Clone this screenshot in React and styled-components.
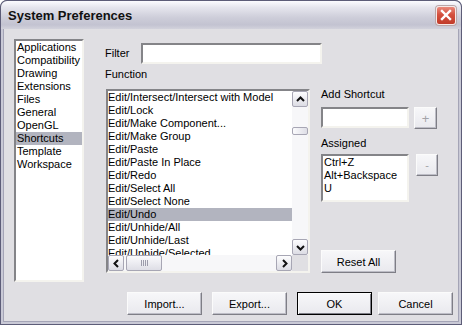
import styled, { createGlobalStyle } from "styled-components";

const GlobalStyle = createGlobalStyle`
  body {
    margin: 0;
    background: #ffffff;
    font-family: "Liberation Sans", Arial, sans-serif;
    font-size: 11px;
  }
`

const Window = styled.div`
  width: 462px;
  height: 325px;
  box-sizing: border-box;
  display: flex;
  flex-direction: column;
  background: #c9c9d6;
  border-radius: 7px 7px 0 0;
  box-shadow: inset 0 0 0 1px #5d5d78;
  padding: 0 3px 3px;
  overflow: hidden;
`

const TitleBar = styled.div`
  height: 28px;
  margin: 0 -3px;
  padding: 0 5px 0 7px;
  display: flex;
  align-items: center;
  justify-content: space-between;
  border-radius: 7px 7px 0 0;
  border: 1px solid #5d5d78;
  border-bottom: none;
  background: linear-gradient(#fcfcff 0%, #e6e6ee 22%, #cdcdd9 60%, #c3c3d1 85%, #d2d2dc 100%);
`

const Title = styled.span`
  font-family: "Liberation Sans", Arial, sans-serif;
  font-weight: bold;
  font-size: 13px;
  color: #111;
`

const CloseButton = styled.div`
  width: 20px;
  height: 19px;
  box-sizing: border-box;
  border: 1px solid #f6e8e6;
  border-radius: 3px;
  background: linear-gradient(#e98a7c, #d4503e 45%, #c13b2a);
  display: flex;
  align-items: center;
  justify-content: center;
  box-shadow: 0 0 0 1px #b9a6a8;
`

const Body = styled.div`
  flex: 1;
  display: flex;
  flex-direction: column;
  background: #e0dfe3;
  border: 1px solid #a4a4b6;
  border-top: none;
  padding: 10px 4px 6px 10px;
`

const Top = styled.div`
  display: flex;
  height: 243px;
`

const ListBox = styled.div`
  box-sizing: border-box;
  width: ${p => p.width}px;
  height: ${p => p.height}px;
  background: #ffffff;
  border: 2px solid;
  border-color: #848488 #f4f3ee #f4f3ee #848488;
  overflow: hidden;
`

const Item = styled.div`
  height: 13px;
  line-height: 13px;
  padding-left: ${p => p.indent || 0}px;
  white-space: nowrap;
  color: #000;
  background: ${p => p.selected ? "#b2b4bf" : "transparent"};
`

const Center = styled.div`
  width: 216px;
  margin-left: 21px;
  padding-top: 4px;
  display: flex;
  flex-direction: column;
`

const FilterRow = styled.div`
  display: flex;
  align-items: center;
  justify-content: space-between;
  width: 217px;
`

const Label = styled.div`
  line-height: 13px;
  color: #000;
  margin-top: ${p => p.top || 0}px;
`

const TextInput = styled.div`
  box-sizing: border-box;
  width: ${p => p.width}px;
  height: 21px;
  background: #fff;
  border: 2px solid;
  border-color: #848488 #f4f3ee #f4f3ee #848488;
`

const FunctionFrame = styled.div`
  box-sizing: border-box;
  width: 204px;
  height: 184px;
  margin: 8px 0 0 1px;
  border: 2px solid;
  border-color: #848488 #f4f3ee #f4f3ee #848488;
  background: #fff;
  display: grid;
  grid-template-columns: 184px 16px;
  grid-template-rows: 164px 16px;
`

const Items = styled.div`
  overflow: hidden;
`

const VScroll = styled.div`
  display: flex;
  flex-direction: column;
  background: #f7f7f9;
`

const HScroll = styled.div`
  display: flex;
  align-items: stretch;
  background: #f7f7f9;
`

const Corner = styled.div`
  background: #e0dfe3;
`

const ArrowBtn = styled.div`
  box-sizing: border-box;
  width: 16px;
  height: 16px;
  border: 1px solid #a7a6b4;
  border-radius: 2px;
  background: linear-gradient(#fdfdfe, #dcdce4);
  display: flex;
  align-items: center;
  justify-content: center;
`

const Track = styled.div`
  flex: 1;
  display: flex;
  flex-direction: ${p => p.vertical ? "column" : "row"};
`

const Thumb = styled.div`
  box-sizing: border-box;
  border: 1px solid #a7a6b4;
  border-radius: 2px;
  background: linear-gradient(${p => p.vertical ? "90deg" : "180deg"}, #fbfbfd, #dedee6);
  display: flex;
  align-items: center;
  justify-content: center;
  gap: 1px;
  ${p => p.vertical ? `
    height: 8px;
    margin-top: 20px;
  ` : `
    width: 36px;
    margin-left: 2px;
  `}
`

const Grip = styled.span`
  width: 1px;
  height: 6px;
  background: #9c9cab;
`

const Right = styled.div`
  flex: 1;
  display: flex;
  flex-direction: column;
  padding-top: 49px;
`

const FieldRow = styled.div`
  display: flex;
  align-items: flex-start;
  gap: ${p => p.gap}px;
  margin-top: ${p => p.top}px;
`

const Button = styled.div`
  box-sizing: border-box;
  width: ${p => p.width || 75}px;
  height: ${p => p.height || 23}px;
  display: flex;
  align-items: center;
  justify-content: center;
  color: ${p => p.disabled ? "#a3a3a8" : "#000"};
  background: linear-gradient(#f7f7f9, #e9e9ee);
  border: 1px solid;
  border-color: ${p => p.isDefault ? "#000" : "#fbfbfb #7e7e86 #7e7e86 #fbfbfb"};
  box-shadow: ${p => p.isDefault
    ? "inset 1px 1px #fbfbfb, inset -1px -1px #7e7e86"
    : "inset -1px -1px #bdbdc6"};
  font-size: ${p => p.big ? 13 : 11}px;
`

const Footer = styled.div`
  display: flex;
  justify-content: flex-end;
  margin-top: 10px;
  padding-right: 1px;
`

const Arrow = ({ dir }) => {
  const paths = {
    up: "M4 9 L7.5 5.5 L11 9",
    down: "M4 6 L7.5 9.5 L11 6",
    left: "M9 4 L5.5 7.5 L9 11",
    right: "M6 4 L9.5 7.5 L6 11",
  };
  return (
    <svg width="14" height="14" viewBox="0 0 14 14">
      <path d={paths[dir]} fill="none" stroke="#111" strokeWidth="2" />
    </svg>
  );
};

const categories = ["Applications", "Compatibility", "Drawing", "Extensions", "Files", "General", "OpenGL", "Shortcuts", "Template", "Workspace"];

const functions = [
  "Edit/Intersect/Intersect with Model",
  "Edit/Lock",
  "Edit/Make Component...",
  "Edit/Make Group",
  "Edit/Paste",
  "Edit/Paste In Place",
  "Edit/Redo",
  "Edit/Select All",
  "Edit/Select None",
  "Edit/Undo",
  "Edit/Unhide/All",
  "Edit/Unhide/Last",
  "Edit/Unhide/Selected",
];

const assigned = ["Ctrl+Z", "Alt+Backspace", "U"];

const App = () => {
  return (
    <>
      <GlobalStyle />
      <Window>
        <TitleBar>
          <Title>System Preferences</Title>
          <CloseButton>
            <svg width="12" height="12" viewBox="0 0 12 12">
              <path d="M2 2 L10 10 M10 2 L2 10" stroke="#fff" strokeWidth="2.4" strokeLinecap="square" />
            </svg>
          </CloseButton>
        </TitleBar>
        <Body>
          <Top>
            <ListBox width={70} height={243}>
              {categories.map(c => (
                <Item key={c} indent={1} selected={c === "Shortcuts"}>{c}</Item>
              ))}
            </ListBox>

            <Center>
              <FilterRow>
                <Label>Filter</Label>
                <TextInput width={181} />
              </FilterRow>
              <Label top={4}>Function</Label>
              <FunctionFrame>
                <Items>
                  {functions.map(f => (
                    <Item key={f} selected={f === "Edit/Undo"}>{f}</Item>
                  ))}
                </Items>
                <VScroll>
                  <ArrowBtn><Arrow dir="up" /></ArrowBtn>
                  <Track vertical>
                    <Thumb vertical />
                  </Track>
                  <ArrowBtn><Arrow dir="down" /></ArrowBtn>
                </VScroll>
                <HScroll>
                  <ArrowBtn><Arrow dir="left" /></ArrowBtn>
                  <Track>
                    <Thumb>
                      <Grip /><Grip /><Grip /><Grip />
                    </Thumb>
                  </Track>
                  <ArrowBtn><Arrow dir="right" /></ArrowBtn>
                </HScroll>
                <Corner />
              </FunctionFrame>
            </Center>

            <Right>
              <Label>Add Shortcut</Label>
              <FieldRow gap={5} top={6}>
                <TextInput width={88} />
                <Button width={23} height={22} disabled big>+</Button>
              </FieldRow>
              <Label top={8}>Assigned</Label>
              <FieldRow gap={7} top={4}>
                <ListBox width={88} height={48}>
                  {assigned.map(a => (
                    <Item key={a} indent={1}>{a}</Item>
                  ))}
                </ListBox>
                <Button width={22} height={22} disabled>-</Button>
              </FieldRow>
              <Button style={{ marginTop: "auto", marginBottom: "9px" }}>Reset All</Button>
            </Right>
          </Top>

          <Footer>
            <Button>Import...</Button>
            <Button style={{ marginLeft: 10 }}>Export...</Button>
            <Button isDefault style={{ marginLeft: 10 }}>OK</Button>
            <Button style={{ marginLeft: 6 }}>Cancel</Button>
          </Footer>
        </Body>
      </Window>
    </>
  );
};

export default App;
